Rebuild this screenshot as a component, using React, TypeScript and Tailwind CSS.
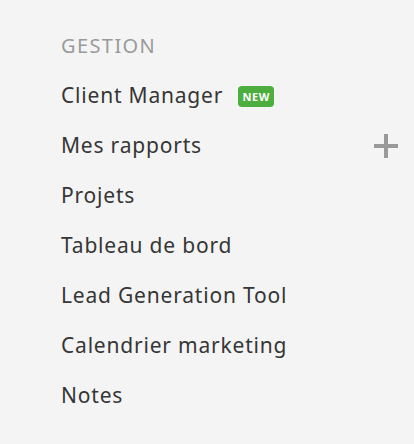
const items = [
  { label: "Client Manager", badge: true },
  { label: "Mes rapports", add: true },
  { label: "Projets" },
  { label: "Tableau de bord" },
  { label: "Lead Generation Tool" },
  { label: "Calendrier marketing" },
  { label: "Notes" },
];

export default function App() {
  return (
    <div
      className="min-h-[444px] w-full bg-[#f4f4f4] pt-[21px] pl-[61px] pr-[16px]"
      style={{ fontFamily: '"Noto Sans", "Open Sans", sans-serif' }}
    >
      <div className="flex h-[50px] items-center text-[20px] uppercase tracking-[1.4px] text-[#9a9a9a]">
        Gestion
      </div>
      {items.map((item) => (
        <div
          key={item.label}
          className="flex h-[50px] items-center text-[21px] tracking-[0.8px] text-[#363636]"
        >
          <span>{item.label}</span>
          {item.badge && (
            <span className="ml-[15px] flex h-[21px] w-[36px] items-center justify-center rounded-[4px] bg-[#4cae3f] text-[11px] font-bold leading-none tracking-[0.5px] text-white">
              NEW
            </span>
          )}
          {item.add && (
            <button className="ml-auto flex h-[24px] w-[24px] items-center justify-center">
              <svg width="24" height="24" viewBox="0 0 24 24">
                <rect x="0" y="10" width="24" height="4" fill="#999999" />
                <rect x="10" y="0" width="4" height="24" fill="#999999" />
              </svg>
            </button>
          )}
        </div>
      ))}
    </div>
  );
}
